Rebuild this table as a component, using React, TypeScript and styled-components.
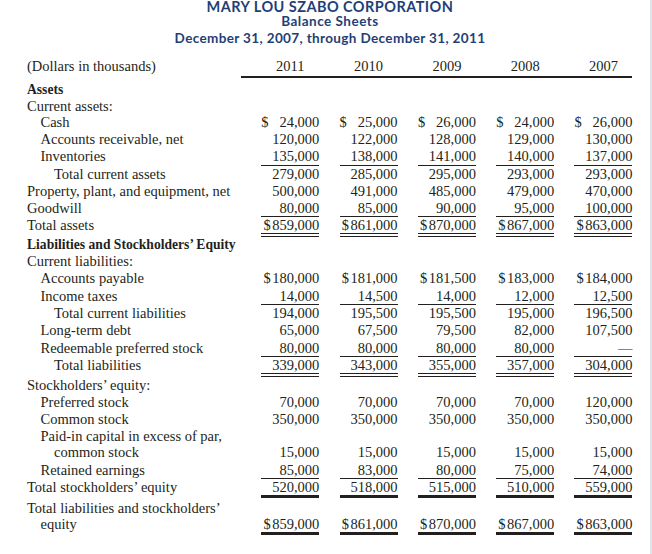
import React from "react";
import styled, { createGlobalStyle } from "styled-components";

type Rule = "none" | "single" | "double" | "thick";

const GlobalStyle = createGlobalStyle`
  html, body { margin: 0; padding: 0; background: #ffffff; }
  body {
    font-family: "Liberation Serif", "Times New Roman", serif;
    color: #231f20;
  }
`;

const Page = styled.div`
  width: 650px;
  height: 554px;
  background: #ffffff;
  border-right: 2px solid #dfe3ea;
  overflow: hidden;
`;

const TitleBlock = styled.header`
  padding-left: 10px;
  text-align: center;
  color: #1f3f77;
  font-family: Lato, "Open Sans", sans-serif;
  font-weight: 700;
`;

const TitleLine = styled.div<{ $size: number; $lh: number; $ls: number }>`
  font-size: ${(p) => p.$size}px;
  line-height: ${(p) => p.$lh}px;
  letter-spacing: ${(p) => p.$ls}px;
  white-space: nowrap;
`;

const Table = styled.div`
  display: flex;
  flex-direction: column;
  font-size: 14.5px;
`;

const Row = styled.div<{ $gap?: number }>`
  display: grid;
  grid-template-columns: 241px repeat(5, 78.3px);
  margin-top: ${(p) => p.$gap ?? 0}px;
`;

const Label = styled.div<{ $indent: number; $bold?: boolean; $h?: number }>`
  padding-left: ${(p) => 27 + p.$indent * 13.5}px;
  line-height: ${(p) => p.$h ?? 16}px;
  font-weight: ${(p) => (p.$bold ? 700 : 400)};
  font-size: ${(p) => (p.$bold ? 13.6 : 14.5)}px;
  white-space: nowrap;
`;

const HeadLabel = styled.div`
  padding-left: 27px;
  line-height: 16px;
  white-space: nowrap;
`;

const YearCell = styled.div`
  padding-left: 20.3px;
  padding-bottom: 2px;
  line-height: 16px;
  text-align: center;
  border-bottom: 2px solid #231f20;
`;

const ruleBorder: Record<Rule, string> = {
  none: "1px solid transparent",
  single: "1px solid #231f20",
  double: "4px double #231f20",
  thick: "3px solid #231f20",
};

const Amount = styled.div<{ $rule: Rule; $split: boolean }>`
  margin-left: 20.3px;
  display: flex;
  justify-content: ${(p) => (p.$split ? "space-between" : "flex-end")};
  line-height: 16.2px;
  white-space: nowrap;
  border-bottom: ${(p) => ruleBorder[p.$rule]};
`;

const Dollar = styled.span<{ $attached: boolean }>`
  margin-right: ${(p) => (p.$attached ? 1.5 : 0)}px;
`;

type Line = {
  label: string;
  indent?: number;
  bold?: boolean;
  values?: string[];
  rule?: Rule;
  gap?: number;
  h?: number;
};

const lines: Line[] = [
  { label: "Assets", bold: true },
  { label: "Current assets:" },
  { label: "Cash", indent: 1, values: ["$ 24,000", "$ 25,000", "$ 26,000", "$ 24,000", "$ 26,000"] },
  { label: "Accounts receivable, net", indent: 1, values: ["120,000", "122,000", "128,000", "129,000", "130,000"] },
  { label: "Inventories", indent: 1, values: ["135,000", "138,000", "141,000", "140,000", "137,000"], rule: "single" },
  { label: "Total current assets", indent: 2, values: ["279,000", "285,000", "295,000", "293,000", "293,000"] },
  { label: "Property, plant, and equipment, net", values: ["500,000", "491,000", "485,000", "479,000", "470,000"] },
  { label: "Goodwill", values: ["80,000", "85,000", "90,000", "95,000", "100,000"], rule: "single" },
  { label: "Total assets", values: ["$859,000", "$861,000", "$870,000", "$867,000", "$863,000"], rule: "double" },
  { label: "Liabilities and Stockholders\u2019 Equity", bold: true },
  { label: "Current liabilities:", h: 16.5 },
  { label: "Accounts payable", indent: 1, values: ["$180,000", "$181,000", "$181,500", "$183,000", "$184,000"] },
  { label: "Income taxes", indent: 1, values: ["14,000", "14,500", "14,000", "12,000", "12,500"], rule: "single", gap: 0.5 },
  { label: "Total current liabilities", indent: 2, values: ["194,000", "195,500", "195,500", "195,000", "196,500"], gap: 0.3 },
  { label: "Long-term debt", indent: 1, values: ["65,000", "67,500", "79,500", "82,000", "107,500"] },
  { label: "Redeemable preferred stock", indent: 1, values: ["80,000", "80,000", "80,000", "80,000", "\u2014"], rule: "single" },
  { label: "Total liabilities", indent: 2, values: ["339,000", "343,000", "355,000", "357,000", "304,000"], rule: "double" },
  { label: "Stockholders\u2019 equity:", h: 17 },
  { label: "Preferred stock", indent: 1, values: ["70,000", "70,000", "70,000", "70,000", "120,000"] },
  { label: "Common stock", indent: 1, values: ["350,000", "350,000", "350,000", "350,000", "350,000"] },
  { label: "Paid-in capital in excess of par,", indent: 1, h: 16 },
  { label: "common stock", indent: 2, values: ["15,000", "15,000", "15,000", "15,000", "15,000"] },
  { label: "Retained earnings", indent: 1, values: ["85,000", "83,000", "80,000", "75,000", "74,000"], rule: "single" },
  { label: "Total stockholders\u2019 equity", values: ["520,000", "518,000", "515,000", "510,000", "559,000"], rule: "thick" },
  { label: "Total liabilities and stockholders\u2019", gap: 2, h: 16 },
  { label: "equity", indent: 1, values: ["$859,000", "$861,000", "$870,000", "$867,000", "$863,000"], rule: "thick" },
];

const years = ["2011", "2010", "2009", "2008", "2007"];

function AmountCell({ value, rule }: { value: string; rule: Rule }) {
  const hasDollar = value.startsWith("$");
  const split = value.startsWith("$ ");
  const num = hasDollar ? value.slice(1).trim() : value;
  return (
    <Amount $rule={rule} $split={split}>
      {hasDollar && <Dollar $attached={!split}>$</Dollar>}
      <span>{num}</span>
    </Amount>
  );
}

export default function App() {
  return (
    <Page>
      <GlobalStyle />
      <TitleBlock>
        <TitleLine $size={14.5} $lh={14} $ls={0.45}>MARY LOU SZABO CORPORATION</TitleLine>
        <TitleLine $size={13.5} $lh={15} $ls={0.5}>Balance Sheets</TitleLine>
        <TitleLine $size={13.5} $lh={19} $ls={0.37}>December 31, 2007, through December 31, 2011</TitleLine>
      </TitleBlock>
      <Table>
        <Row $gap={10}>
          <HeadLabel>(Dollars in thousands)</HeadLabel>
          {years.map((y) => (
            <YearCell key={y}>{y}</YearCell>
          ))}
        </Row>
        {lines.map((l, i) => (
          <Row key={i} $gap={(i === 0 ? 4 : 0) + (l.gap ?? 0)}>
            <Label $indent={l.indent ?? 0} $bold={l.bold} $h={l.h}>
              {l.label}
            </Label>
            {l.values?.map((v, j) => (
              <AmountCell key={j} value={v} rule={l.rule ?? "none"} />
            ))}
          </Row>
        ))}
      </Table>
    </Page>
  );
}
